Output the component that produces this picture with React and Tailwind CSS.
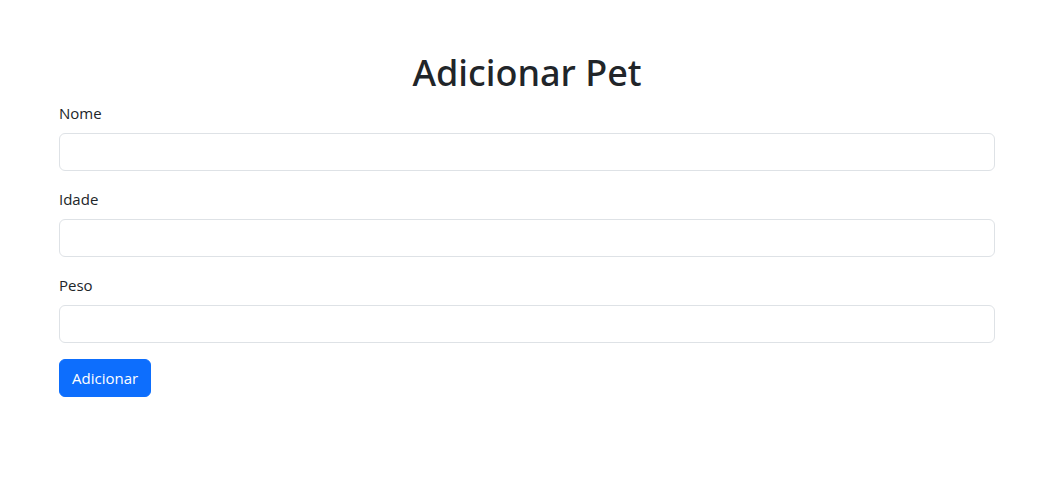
const fields = [
  { id: "nome", label: "Nome" },
  { id: "idade", label: "Idade" },
  { id: "peso", label: "Peso" },
];

export default function App() {
  return (
    <main className="min-h-screen bg-white px-[59px] py-[49px] font-['Open_Sans','Noto_Sans',sans-serif] text-base text-[#212529]">
      <h1 className="mb-1 text-center font-['Noto_Sans','Open_Sans',sans-serif] text-[36px] leading-12 font-medium">
        Adicionar Pet
      </h1>
      <form onSubmit={(e) => e.preventDefault()}>
        {fields.map((field) => (
          <div key={field.id} className="mb-4">
            <label htmlFor={field.id} className="mb-2 block text-[15px] leading-6">
              {field.label}
            </label>
            <input
              id={field.id}
              name={field.id}
              type="text"
              className="block h-[38px] w-full rounded-md border border-[#dee2e6] bg-white px-3 outline-none focus:border-[#86b7fe] focus:ring-4 focus:ring-[#0d6efd]/25"
            />
          </div>
        ))}
        <button
          type="submit"
          className="h-[38px] rounded-md border border-[#0d6efd] bg-[#0d6efd] px-3 text-[15px] leading-6 text-white hover:bg-[#0b5ed7]"
        >
          Adicionar
        </button>
      </form>
    </main>
  );
}
